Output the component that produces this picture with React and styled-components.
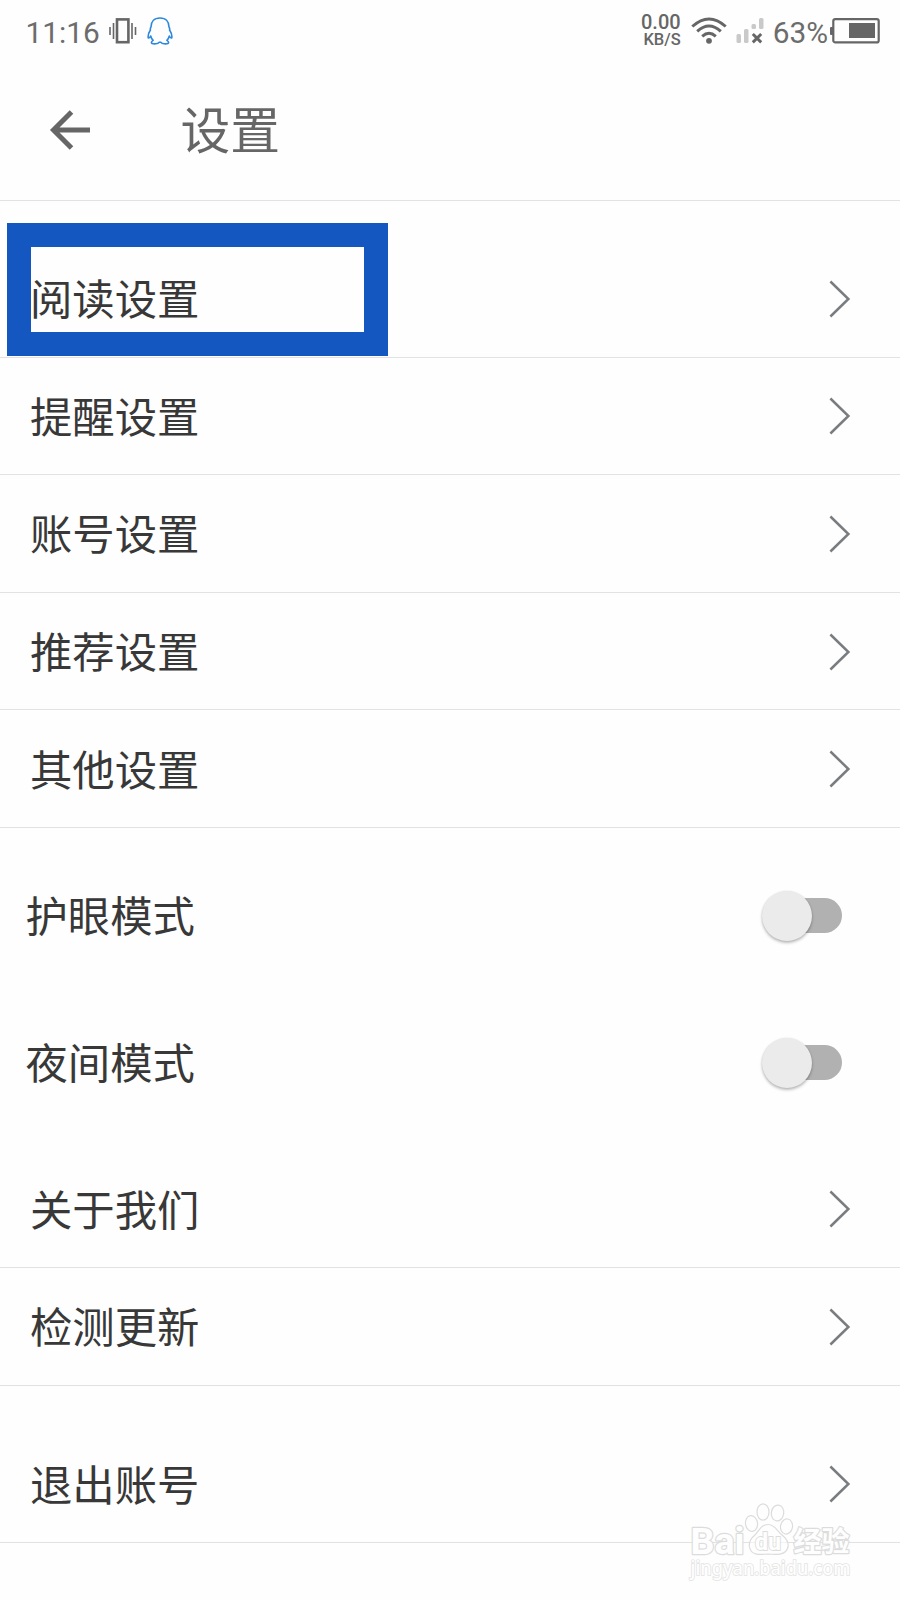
import React from "react";
import styled, { createGlobalStyle } from "styled-components";

const GlobalStyle = createGlobalStyle`
  * { box-sizing: border-box; }
  body {
    margin: 0;
    background: #fefefe;
    font-family: Roboto, "Noto Sans CJK SC", sans-serif;
  }
`;

const Screen = styled.main`
  position: relative;
  width: 900px;
  height: 1600px;
  overflow: hidden;
  background: #fefefe;
  color: #383838;
`;

const StatusBar = styled.div`
  display: flex;
  justify-content: space-between;
  height: 62px;
  padding: 0 20px 0 25.5px;
  color: #666;
`;

const StatusGroup = styled.div`
  display: flex;
  align-items: center;
`;

const StatusText = styled.span`
  font-size: 29.8px;
  line-height: 36px;
  padding-top: 4px;
  margin-left: ${(p) => p.$gap || 0}px;
  color: #6c6c6c;
`;

const StatusIcon = styled.svg`
  display: block;
  flex: none;
  margin-left: ${(p) => p.$gap || 0}px;
`;

const NetSpeed = styled.div`
  display: flex;
  flex-direction: column;
  align-items: flex-end;
  font-weight: 500;
`;

const SpeedValue = styled.span`
  font-size: 20px;
  line-height: 17px;
`;

const SpeedUnit = styled.span`
  font-size: 16.5px;
  line-height: 17px;
`;

const Header = styled.header`
  display: flex;
  align-items: center;
  height: 139px;
  padding: 0 0 0 49px;
  border-bottom: 1px solid #e2e2e2;
  color: #666;
`;

const Title = styled.h1`
  margin: 0 0 0 89.5px;
  padding-top: 2px;
  font-size: 49.8px;
  font-weight: 400;
  line-height: 60px;
`;

const Section = styled.section`
  padding-top: ${(p) => p.$top}px;
`;

const Row = styled.div`
  position: relative;
  display: flex;
  align-items: center;
  justify-content: space-between;
  height: 117.6px;
  padding: 1px 49px 0 30px;
  border-bottom: 1px solid #e2e2e2;
`;

const ToggleRow = styled(Row)`
  height: 147px;
  padding: 0 58px 0 25.5px;
  border-bottom: 0;
`;

const Label = styled.span`
  padding-top: 4.8px;
  font-size: 42.35px;
  line-height: 60px;
`;

const Highlight = styled.div`
  position: absolute;
  left: 7px;
  top: -17px;
  width: 381px;
  height: 133px;
  border: 24px solid #1557c0;
`;

const Track = styled.div`
  display: flex;
  align-items: center;
  width: 74px;
  height: 35px;
  border-radius: 18px;
  background: #b1b1b1;
`;

const ToggleBox = styled.div`
  display: flex;
  padding-left: 6px;
`;

const Knob = styled.div`
  flex: none;
  width: 50px;
  height: 50px;
  margin-left: -6px;
  border-radius: 50%;
  background: #ebebeb;
  box-shadow: 0 2px 3px rgba(0, 0, 0, 0.26), 0 0 2px rgba(0, 0, 0, 0.1);
`;

const Watermark = styled.svg`
  position: absolute;
  left: 680px;
  top: 1495px;
  font-family: Roboto, "Noto Sans CJK SC", sans-serif;
`;

const Chevron = () => (
  <svg width="22" height="38" viewBox="0 0 22 38" fill="none" stroke="#7a7d7f" strokeWidth="2.5">
    <path d="M1.4 1.5 19.4 19 1.4 36.5" />
  </svg>
);

const Toggle = () => (
  <ToggleBox>
    <Track>
      <Knob />
    </Track>
  </ToggleBox>
);

const LinkRow = ({ label, highlighted }) => (
  <Row>
    <Label>{label}</Label>
    <Chevron />
    {highlighted && <Highlight />}
  </Row>
);

const SwitchRow = ({ label }) => (
  <ToggleRow>
    <Label>{label}</Label>
    <Toggle />
  </ToggleRow>
);

const VibrateIcon = () => (
  <StatusIcon $gap={9} width="28" height="26" viewBox="0 0 28 26" fill="none" stroke="#666">
    <rect x="8" y="1.4" width="11.4" height="22.8" strokeWidth="2.6" />
    <path d="M1 9v8M26.500 9v8M4.500 5v16M23 5v16" strokeWidth="1.6" />
  </StatusIcon>
);

const PenguinIcon = () => (
  <StatusIcon $gap={9.8} width="26" height="28" viewBox="0 0 26 28" fill="none" stroke="#2b88dc" strokeWidth="1.6" strokeLinejoin="round">
    <path d="M13 1C7 1 4 5 4 10C3.200 11 3.200 12 3.400 13C1.500 16 .8 19 1.300 21C2.300 21.400 3.100 20 3.700 19C4.200 21 5.200 22.500 6.100 23.400C4.500 24.300 4 26 5 26.400C7 27.200 11 26.900 12 25.300H14C15 26.900 19 27.200 21 26.400C22 26 21.500 24.300 19.900 23.400C20.800 22.500 21.800 21 22.300 19C22.900 20 23.700 21.400 24.700 21C25.200 19 24.500 16 22.600 13C22.800 12 22.800 11 22 10C22 5 19 1 13 1Z" />
  </StatusIcon>
);

const WifiIcon = () => (
  <StatusIcon $gap={10} width="36" height="28" viewBox="0 0 36 28" fill="none" stroke="#666" strokeWidth="3">
    <path d="M1.300 9.500Q18-5.500 34.700 9.500M6.200 14.300Q18 3.700 29.800 14.300M11.200 19.300Q18 13.200 24.800 19.300" />
    <circle cx="18" cy="23.800" r="2.900" fill="#666" stroke="none" />
  </StatusIcon>
);

const SignalIcon = () => (
  <StatusIcon $gap={9} width="28" height="26" viewBox="0 0 28 26" fill="#c9c9c9">
    <rect x="0.500" y="16" width="4.500" height="9" rx="1.500" />
    <rect x="8" y="11" width="4.500" height="14" rx="1.500" />
    <rect x="15.500" y="6" width="4.500" height="5" rx="1.500" />
    <rect x="23" y="0" width="4.500" height="11" rx="1.500" />
    <path d="m16.800 16 8.400 8.400m0-8.400-8.400 8.400" stroke="#666" strokeWidth="2.900" />
  </StatusIcon>
);

const BatteryIcon = () => (
  <StatusIcon $gap={2} width="50" height="26" viewBox="0 0 50 26">
    <path d="M0 10a1 1 0 0 1 1-1h2v8H1a1 1 0 0 1-1-1Z" fill="#666" />
    <rect x="3.300" y="1.100" width="45.400" height="23.300" rx="2" fill="none" stroke="#666" strokeWidth="2.200" />
    <rect x="19" y="5" width="26" height="15" fill="#666" />
  </StatusIcon>
);

const BackIcon = () => (
  <svg width="42" height="42" viewBox="0 0 42 42" fill="none" stroke="#666" strokeWidth="5">
    <path d="M22.500 2 4.500 20l18 18M4 20h37" />
  </svg>
);

const BrandMark = () => (
  <Watermark width="190" height="95" viewBox="0 0 190 95" fill="#fefefe" stroke="#dcdcdc" strokeWidth="1.200">
    <text x="10.500" y="58.800" fontSize="37" fontWeight="700" textLength="54" lengthAdjust="spacingAndGlyphs" strokeWidth="2.400" paintOrder="stroke" strokeLinejoin="round">Bai</text>
    <text x="113.500" y="56.800" fontSize="28" fontWeight="700" fontFamily="Noto Sans CJK SC" strokeWidth="2.400" paintOrder="stroke" strokeLinejoin="round">经验</text>
    <g fillOpacity="0.6">
      <ellipse cx="71.500" cy="28.500" rx="6" ry="8" transform="rotate(-8 71.500 28.500)" />
      <ellipse cx="83" cy="17" rx="6" ry="8.200" />
      <ellipse cx="97.500" cy="18" rx="6.200" ry="8" transform="rotate(8 97.500 18)" />
      <ellipse cx="106.500" cy="31.500" rx="6" ry="7.600" transform="rotate(10 106.500 31.500)" />
      <path d="M88 29.500C81 29.500 79 36 75 40C70 44 68.500 47 69.500 52C71 60 78 60 88 59C98 60 106 60 108 52C109 47 107 44 102 40C97 36 95 29.500 88 29.500Z" />
    </g>
    <text x="75" y="54.500" fontSize="24" fontWeight="700" textLength="26" lengthAdjust="spacingAndGlyphs" strokeWidth="1.800" paintOrder="stroke">du</text>
    <text x="10.500" y="80" fontSize="19" textLength="160" lengthAdjust="spacingAndGlyphs" fontFamily="Noto Sans" fontWeight="500" strokeWidth="1.600" stroke="#e3e3e3" paintOrder="stroke">jingyan.baidu.com</text>
  </Watermark>
);

const MENU = ["阅读设置", "提醒设置", "账号设置", "推荐设置", "其他设置"];
const MODES = ["护眼模式", "夜间模式"];
const INFO = ["关于我们", "检测更新"];

export default function App() {
  return (
    <Screen>
      <GlobalStyle />
      <StatusBar>
        <StatusGroup>
          <StatusText>11:16</StatusText>
          <VibrateIcon />
          <PenguinIcon />
        </StatusGroup>
        <StatusGroup>
          <NetSpeed>
            <SpeedValue>0.00</SpeedValue>
            <SpeedUnit>KB/S</SpeedUnit>
          </NetSpeed>
          <WifiIcon />
          <SignalIcon />
          <StatusText $gap={9}>63%</StatusText>
          <BatteryIcon />
        </StatusGroup>
      </StatusBar>
      <Header>
        <BackIcon />
        <Title>设置</Title>
      </Header>
      <Section $top={39}>
        {MENU.map((label, i) => (
          <LinkRow key={label} label={label} highlighted={i === 0} />
        ))}
      </Section>
      <Section $top={14.5}>
        {MODES.map((label) => (
          <SwitchRow key={label} label={label} />
        ))}
      </Section>
      <Section $top={14.2}>
        {INFO.map((label) => (
          <LinkRow key={label} label={label} />
        ))}
      </Section>
      <Section $top={39.6}>
        <LinkRow label="退出账号" />
      </Section>
      <BrandMark />
    </Screen>
  );
}
